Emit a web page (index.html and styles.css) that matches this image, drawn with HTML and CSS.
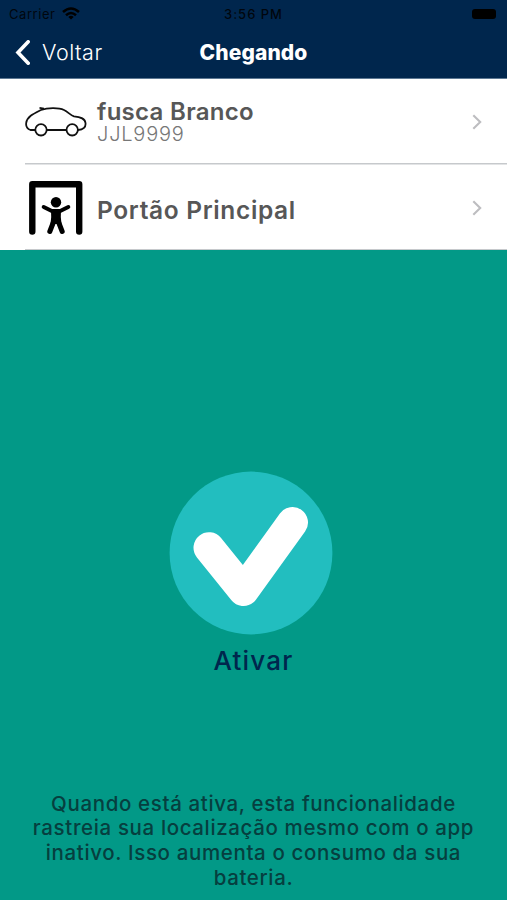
FILE: index.html
```html
<!DOCTYPE html>
<html lang="pt-BR">
<head>
    <meta charset="UTF-8">
    <meta name="viewport" content="width=device-width, initial-scale=1.0">
    <title>Chegando</title>
    <link rel="stylesheet" href="styles.css">
</head>
<body>
    <header class="header">
        <div class="status-bar">
            <div class="carrier">
                <span>Carrier</span>
                <svg width="18" height="13" viewBox="0 0 18 13" fill="none" stroke="#000" stroke-width="2.6">
                    <path d="M1 5 Q9 -2 17 5"/>
                    <path d="M4 8.2 Q9 3.8 14 8.2"/>
                    <path d="M9 12.6 L6.3 9.9 Q9 7.8 11.7 9.9 Z" fill="#000" stroke="none"/>
                </svg>
            </div>
            <span class="clock">3:56 PM</span>
            <div class="battery-wrap"><span class="battery"></span></div>
        </div>
        <nav class="nav-bar">
            <a class="back">
                <svg width="15" height="25" viewBox="0 0 15 25" fill="none" stroke="#fff" stroke-width="3.6">
                    <path d="M13.2 1.8 L3 12.5 L13.2 23.2" stroke-linecap="round"/>
                </svg>
                <span>Voltar</span>
            </a>
            <h1 class="title">Chegando</h1>
            <span></span>
        </nav>
    </header>

    <main>
        <div class="row">
            <div class="icon">
                <svg width="62" height="30" viewBox="0 0 62 30" fill="none" stroke="#111" stroke-width="1.8">
                    <path d="M10 23 H5.5 C1.5 21.5 0.8 19 1.2 16 C2 9.5 9 6.5 16 3 C23 0.4 34 0.6 39 3 C43 5 46 8.5 49 9.4 C55 10 60 11 60.5 16 C61 20 58.5 22.8 53 23 M22 23 H41"/>
                    <path d="M14.5 0.9 L19 1.6"/>
                    <circle cx="16" cy="22.8" r="5.7"/>
                    <circle cx="47.2" cy="22.8" r="5.7"/>
                </svg>
            </div>
            <div class="info car-info">
                <div class="name car-name">fusca Branco</div>
                <div class="plate">JJL9999</div>
            </div>
            <svg class="arrow" width="10" height="16" viewBox="0 0 10 16" fill="none" stroke="#bdbdc0" stroke-width="2.1">
                <path d="M1.3 1.2 L8.2 8 L1.3 14.8"/>
            </svg>
        </div>
        <div class="row gate-row">
            <div class="icon gate">
                <svg width="54" height="54" viewBox="0 0 54 54" fill="none" stroke="#000" stroke-linecap="round" stroke-linejoin="round">
                    <path d="M3.3 50.5 V3.3 H50.2 V50.5" stroke-width="6.4"/>
                    <circle cx="27" cy="21.3" r="5.2" fill="#000" stroke="none"/>
                    <path d="M14.7 26 L22.8 30 H31.2 L39.3 26" stroke-width="4"/>
                    <path d="M22 29 H32 L31.8 36 L32.5 43 H21.5 L22.2 36 Z" fill="#000" stroke="none"/>
                    <path d="M24.5 41 L20.8 50.5 M29.5 41 L33.2 50.5" stroke-width="5"/>
                </svg>
            </div>
            <div class="info">
                <div class="name gate-name">Portão Principal</div>
            </div>
            <svg class="arrow" width="10" height="16" viewBox="0 0 10 16" fill="none" stroke="#bdbdc0" stroke-width="2.1">
                <path d="M1.3 1.2 L8.2 8 L1.3 14.8"/>
            </svg>
        </div>

        <section class="activate">
            <svg class="check" width="164" height="164" viewBox="0 0 164 164" fill="none">
                <circle cx="82" cy="82" r="81.4" fill="#22bebf"/>
                <path d="M40 76.7 L74.5 119.5 L123.5 51.5" stroke="#fff" stroke-width="31" stroke-linecap="round" stroke-linejoin="round"/>
            </svg>
            <div class="activate-label">Ativar</div>
            <p class="description">
                Quando está ativa, esta funcionalidade<br>
                rastreia sua localização mesmo com o app<br>
                inativo. Isso aumenta o consumo da sua<br>
                bateria.
            </p>
        </section>
    </main>
</body>
</html>
```
FILE: styles.css
```css
* {
    box-sizing: border-box;
}

body {
    margin: 0;
    height: 900px;
    overflow: hidden;
    font-family: Inter, "Noto Sans", sans-serif;
    background-color: #029987;
}

svg {
    display: block;
    flex-shrink: 0;
}

.header {
    height: 79px;
    background-color: #00264d;
    border-bottom: 1px solid #5d7893;
}

.status-bar {
    display: grid;
    grid-template-columns: 1fr auto 1fr;
    align-items: center;
    height: 27px;
    padding: 0 11px 0 9px;
    font-size: 13px;
    color: #00060e;
}

.carrier {
    display: flex;
    align-items: center;
    gap: 7px;
    letter-spacing: 0.55px;
}

.clock {
    padding-left: 2px;
    font-weight: 500;
    letter-spacing: 1px;
}

.battery-wrap {
    display: flex;
    justify-content: flex-end;
}

.battery {
    width: 24px;
    height: 10px;
    border-radius: 3px;
    background-color: #000;
}

.nav-bar {
    display: grid;
    grid-template-columns: 1fr auto 1fr;
    align-items: center;
    height: 50px;
    padding: 0 15px;
    color: #fff;
}

.back {
    display: flex;
    align-items: center;
    gap: 12px;
    font-size: 21.5px;
    font-weight: 300;
    letter-spacing: 0.5px;
}

.title {
    margin: 0;
    font-size: 21px;
    font-weight: 800;
    letter-spacing: 0.1px;
}

.row {
    display: flex;
    align-items: center;
    height: 85.5px;
    padding: 0 25px;
    background: linear-gradient(#c6c9cc, #c6c9cc) 25px 100% / 100% 1.5px no-repeat #fff;
}

.gate-row {
    padding-top: 2px;
}

.icon {
    width: 72px;
}

.gate {
    padding-left: 4px;
}

.info {
    flex: 1;
}

.car-info {
    padding-bottom: 2px;
}

.name {
    font-size: 24px;
    line-height: 26px;
    font-weight: 600;
    color: #575757;
}

.car-name {
    letter-spacing: 0.3px;
}

.gate-name {
    padding-top: 3px;
    font-size: 24.5px;
    letter-spacing: 0.65px;
}

.plate {
    font-size: 20px;
    line-height: 18px;
    font-weight: 300;
    letter-spacing: 0.8px;
    color: #777;
}

.activate {
    display: flex;
    flex-direction: column;
    align-items: center;
    padding-top: 221px;
}

.check {
    margin-right: 5.5px;
}

.activate-label {
    margin-top: 9px;
    font-size: 26px;
    line-height: 34px;
    font-weight: 500;
    letter-spacing: 1.2px;
    color: #00264d;
}

.description {
    margin: 113.5px 0 0;
    font-size: 20.5px;
    line-height: 24.7px;
    font-weight: 500;
    letter-spacing: 0.63px;
    text-align: center;
    white-space: nowrap;
    color: #063f3f;
}
```
